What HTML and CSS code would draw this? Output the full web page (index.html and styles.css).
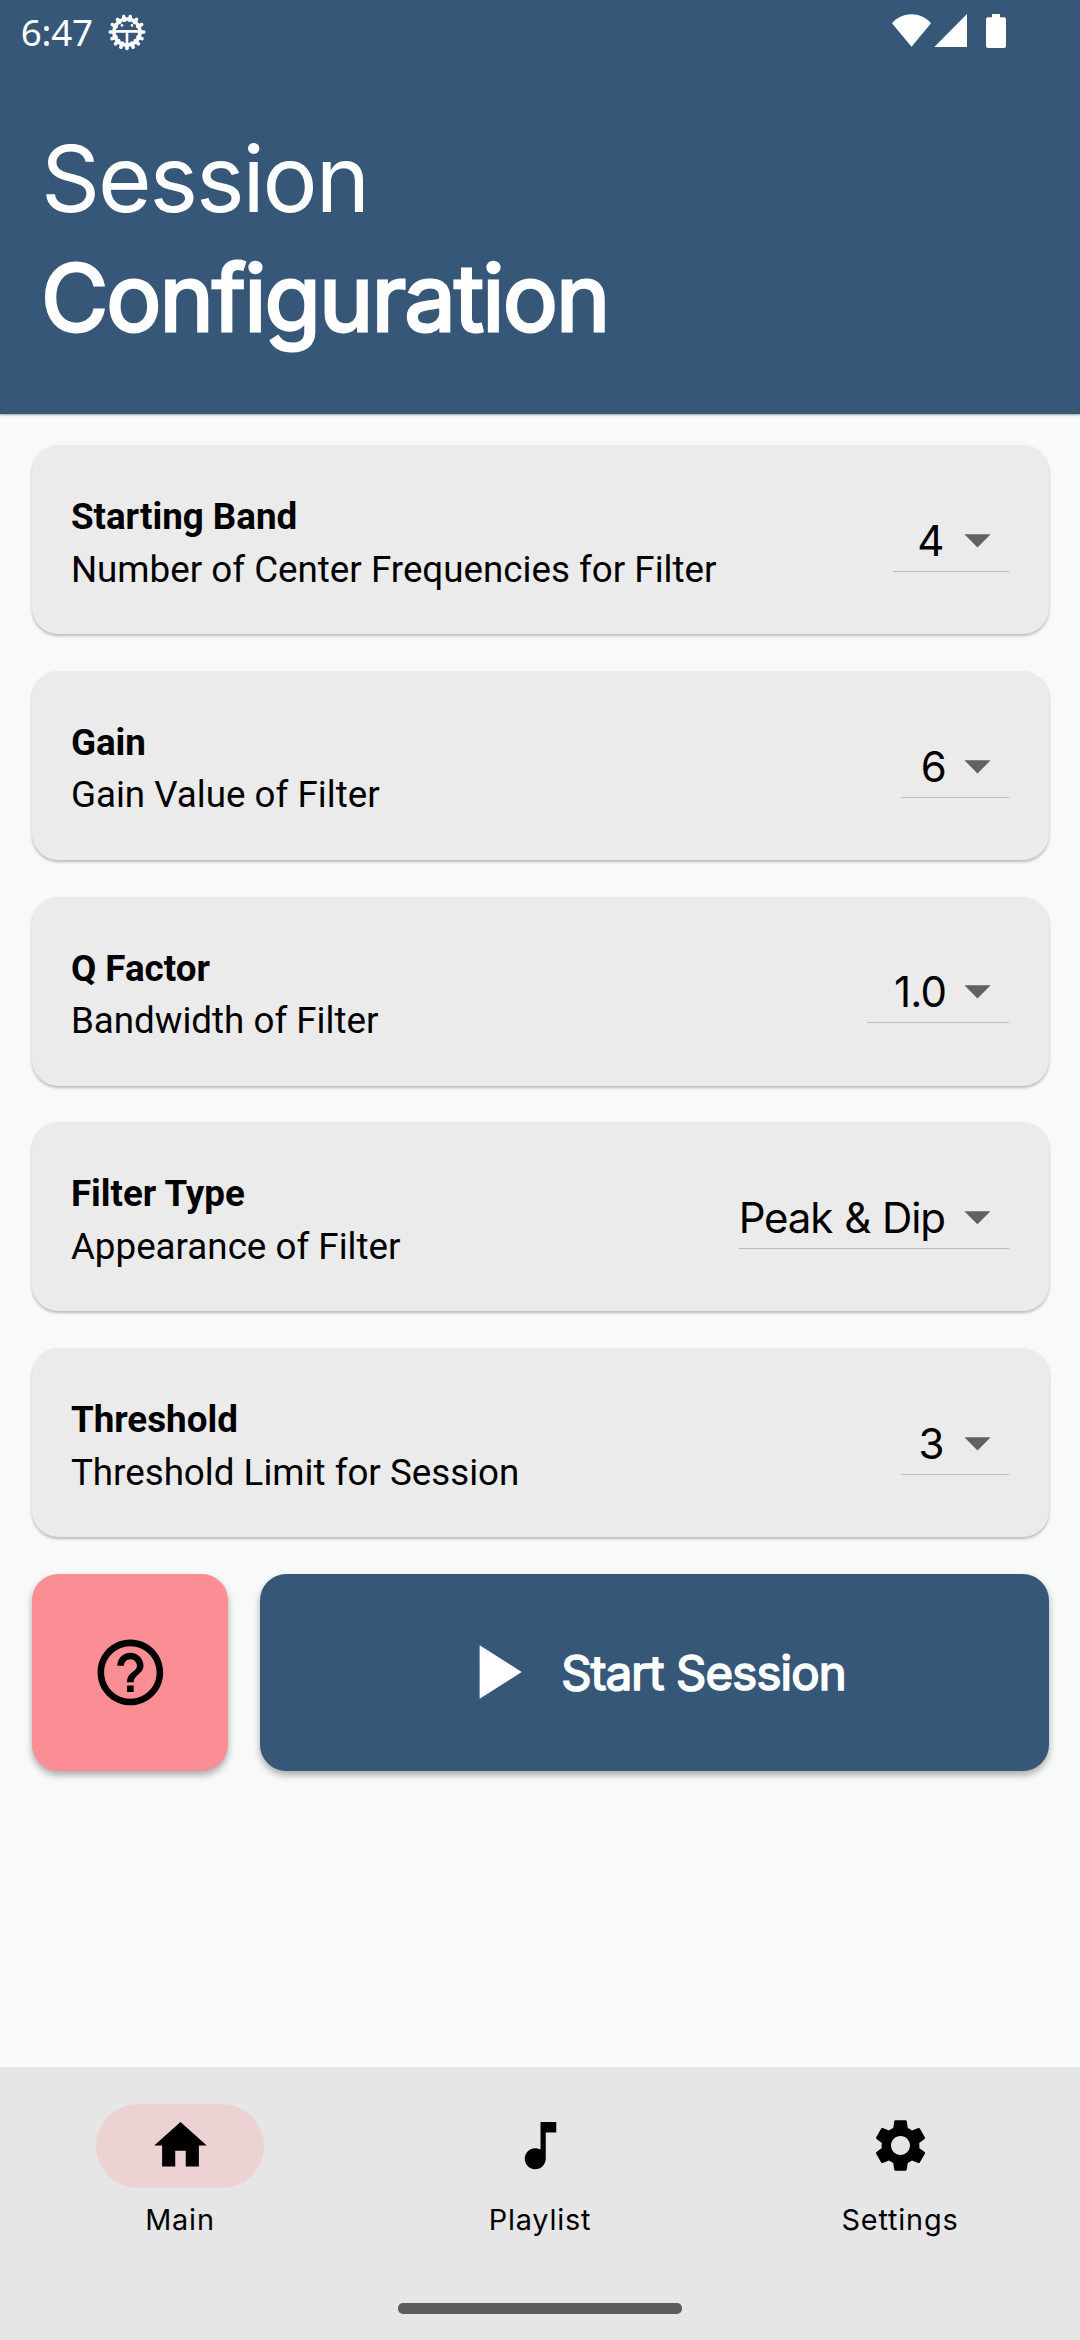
FILE: index.html
```html
<!DOCTYPE html>
<html lang="en">
<head>
<meta charset="utf-8">
<title>Session Configuration</title>
<link rel="stylesheet" href="styles.css">
</head>
<body>
<div class="app">
  <header class="header">
    <div class="status">
      <span class="clock">6:47</span>
      <svg class="debug-icon" viewBox="0 0 38 38">
        <g stroke="#fff" stroke-width="3.6" stroke-linecap="round">
          <path d="M19 3.2V7" transform="rotate(12 19 19)"/>
          <path d="M19 3.2V7" transform="rotate(-12 19 19)"/>
          <path d="M19 3.2V7" transform="rotate(37 19 19)"/>
          <path d="M19 3.2V7" transform="rotate(-37 19 19)"/>
          <path d="M19 2.6V7" transform="rotate(63 19 19)"/>
          <path d="M19 2.6V7" transform="rotate(-63 19 19)"/>
          <path d="M19 2.2V7" transform="rotate(90 19 19)"/>
          <path d="M19 2.2V7" transform="rotate(-90 19 19)"/>
          <path d="M19 2.6V7" transform="rotate(114 19 19)"/>
          <path d="M19 2.6V7" transform="rotate(-114 19 19)"/>
          <path d="M19 2.6V7" transform="rotate(136 19 19)"/>
          <path d="M19 2.6V7" transform="rotate(-136 19 19)"/>
          <path d="M19 2.6V7" transform="rotate(158 19 19)"/>
          <path d="M19 2.6V7" transform="rotate(-158 19 19)"/>
          <path d="M19 35.4V31"/>
        </g>
        <circle cx="19" cy="19" r="13" fill="none" stroke="#fff" stroke-width="3.6"/>
        <path d="M7 18.4H31M19 18.4V32" stroke="#fff" stroke-width="2.6" fill="none"/>
        <circle cx="14" cy="12.4" r="1.3" fill="#fff"/>
        <circle cx="24" cy="12.4" r="1.3" fill="#fff"/>
      </svg>
      <svg class="system-icons" viewBox="0 0 114 34">
        <path d="M0 9.2C10.5-2.6 28.5-2.6 39 9.2L19.5 32.8Z"/>
        <path d="M42.3 33H75V0Z"/>
        <path d="M100 0h8v3.2h4.2q1.8 0 1.8 1.8v27q0 2-2 2h-16q-2 0-2-2V5q0-1.800 1.800-1.800h4.200z"/>
      </svg>
    </div>
    <h1 class="title"><span class="title-light">Session</span><span class="title-bold">Configuration</span></h1>
  </header>

  <main class="content">
    <section class="card">
      <div class="card-text"><h2>Starting Band</h2><p>Number of Center Frequencies for Filter</p></div>
      <div class="select select-band"><span>4</span><svg viewBox="0 0 24 24"><path d="M7 10l5 5 5-5z"/></svg></div>
    </section>
    <section class="card">
      <div class="card-text"><h2>Gain</h2><p>Gain Value of Filter</p></div>
      <div class="select select-gain"><span>6</span><svg viewBox="0 0 24 24"><path d="M7 10l5 5 5-5z"/></svg></div>
    </section>
    <section class="card">
      <div class="card-text"><h2>Q Factor</h2><p>Bandwidth of Filter</p></div>
      <div class="select select-q"><span>1.0</span><svg viewBox="0 0 24 24"><path d="M7 10l5 5 5-5z"/></svg></div>
    </section>
    <section class="card">
      <div class="card-text"><h2>Filter Type</h2><p>Appearance of Filter</p></div>
      <div class="select select-type"><span>Peak &amp; Dip</span><svg viewBox="0 0 24 24"><path d="M7 10l5 5 5-5z"/></svg></div>
    </section>
    <section class="card">
      <div class="card-text"><h2>Threshold</h2><p>Threshold Limit for Session</p></div>
      <div class="select select-threshold"><span>3</span><svg viewBox="0 0 24 24"><path d="M7 10l5 5 5-5z"/></svg></div>
    </section>

    <div class="actions">
      <button class="btn btn-help" aria-label="Help">
        <svg viewBox="0 0 24 24"><path d="M11 18h2v-2h-2v2zm1-16C6.480 2 2 6.480 2 12s4.480 10 10 10 10-4.480 10-10S17.520 2 12 2zm0 18c-4.410 0-8-3.590-8-8s3.590-8 8-8 8 3.590 8 8-3.590 8-8 8zm0-14c-2.210 0-4 1.790-4 4h2c0-1.100.900-2 2-2s2 .900 2 2c0 2-3 1.750-3 5h2c0-2.250 3-2.500 3-5 0-2.210-1.790-4-4-4z"/></svg>
      </button>
      <button class="btn btn-start">
        <svg viewBox="0 0 24 24"><path d="M8 5v14l11-7z"/></svg>
        <span>Start Session</span>
      </button>
    </div>
  </main>

  <footer class="nav">
    <nav class="tabs">
      <a class="tab tab-active"><span class="pill"><svg viewBox="0 0 24 24"><path d="M10 20v-6h4v6h5v-8h3L12 3 2 12h3v8z"/></svg></span><span class="label">Main</span></a>
      <a class="tab"><span class="pill"><svg viewBox="0 0 24 24"><path d="M12 3v10.550c-.590-.340-1.270-.550-2-.550-2.210 0-4 1.790-4 4s1.790 4 4 4 4-1.790 4-4V7h4V3h-6z"/></svg></span><span class="label">Playlist</span></a>
      <a class="tab"><span class="pill"><svg viewBox="0 0 24 24"><path d="M19.140 12.940c.040-.300.060-.610.060-.940 0-.320-.020-.640-.070-.940l2.030-1.580c.180-.140.230-.410.120-.610l-1.920-3.320c-.120-.220-.370-.290-.590-.220l-2.390.960c-.500-.380-1.030-.700-1.620-.940l-.360-2.540c-.040-.240-.240-.410-.480-.410h-3.840c-.240 0-.430.170-.470.410l-.360 2.540c-.590.240-1.130.570-1.620.940l-2.390-.960c-.220-.080-.470 0-.590.220L2.740 8.870c-.120.210-.080.470.120.610l2.030 1.580c-.050.300-.090.630-.090.940s.020.640.070.940l-2.030 1.580c-.180.140-.230.410-.120.610l1.920 3.320c.120.220.370.290.590.220l2.390-.960c.500.380 1.030.700 1.620.940l.360 2.540c.050.240.240.410.480.410h3.840c.240 0 .440-.170.470-.410l.360-2.540c.590-.240 1.130-.560 1.620-.940l2.390.960c.220.080.470 0 .590-.220l1.920-3.320c.120-.220.070-.470-.120-.610l-2.010-1.580zM12 15.600c-1.980 0-3.600-1.620-3.600-3.600s1.620-3.600 3.600-3.600 3.600 1.620 3.600 3.600-1.620 3.600-3.600 3.600z"/></svg></span><span class="label">Settings</span></a>
    </nav>
    <div class="home-bar"></div>
  </footer>
</div>
</body>
</html>
```
FILE: styles.css
```css
* { box-sizing: border-box; margin: 0; padding: 0; }

body { background: #f8faf9; color: #000; font-family: Inter, sans-serif; }

.app { width: 1080px; height: 2340px; display: flex; flex-direction: column; }

/* Header */
.header {
  height: 413.5px;
  background: #365778;
  color: #fff;
  box-shadow: 0 1px 2px rgba(0, 0, 0, .35);
}
.status { height: 63px; display: flex; align-items: flex-start; padding: 0 74px 0 20.7px; }
.clock { font: 36.75px/50px "Noto Sans", sans-serif; margin-top: 7px; letter-spacing: -.2px; }
.debug-icon { width: 38px; height: 38px; margin: 13px 0 0 15.5px; }
.system-icons { width: 114px; height: 34px; margin: 14px 0 0 auto; fill: #fff; }
.title {
  padding: 57px 0 0 41px;
  font-size: 92px;
  line-height: 118.800px;
  font-weight: 400;
  letter-spacing: -2.100px;
}
.title span { display: block; }
.title-bold { -webkit-text-stroke: 2.900px #fff; letter-spacing: -1.900px; }

/* Setting cards */
.content { flex: 1; padding: 31.500px; display: flex; flex-direction: column; gap: 36.750px; }
.card {
  height: 189px;
  padding: 46px 39.500px 0 39.400px;
  display: flex;
  justify-content: space-between;
  align-items: flex-start;
  background: #ebebeb;
  border-radius: 26.250px;
  box-shadow: 0 2px 3px rgba(0, 0, 0, .26);
}
.card-text { font: 36.750px/52.500px Roboto, sans-serif; }
.card-text h2 { font-size: inherit; font-weight: 700; }

.select {
  display: flex;
  justify-content: flex-end;
  height: 64px;
  margin-top: 16.800px;
  border-bottom: 1px solid #bdbdbd;
  font-size: 42px;
  line-height: 65px;
  letter-spacing: -.900px;
  white-space: nowrap;
}
.select svg { width: 63px; height: 63px; fill: #616161; }
.select-band { width: 115.700px; }
.select-band span, .select-threshold span { padding-right: 2.500px; }
.select-gain, .select-threshold { width: 107.700px; }
.select-q { width: 142px; }
.select-type { width: 270.300px; word-spacing: 1.500px; letter-spacing: -1.200px; }
.select-type span { padding-right: 1.500px; }

/* Buttons */
.actions { display: flex; gap: 31.500px; }
.btn {
  height: 196.900px;
  display: flex;
  align-items: center;
  justify-content: center;
  border: 0;
  border-radius: 26.250px;
  box-shadow: 0 4px 7px rgba(0, 0, 0, .32);
  font-family: inherit;
}
.btn-help { width: 196.900px; background: #fa8e94; }
.btn-help svg { width: 78.750px; height: 78.750px; }
.btn-start { flex: 1; justify-content: flex-start; padding-left: 189px; gap: 20.500px; background: #365778; color: #fff; }
.btn-start svg { width: 91.900px; height: 91.900px; fill: #fff; }
.btn-start span { font-size: 47.250px; letter-spacing: -.830px; -webkit-text-stroke: 1.700px #fff; }

/* Bottom navigation */
.nav { height: 273px; background: #e6e6e6; }
.tabs { display: grid; grid-template-columns: repeat(3, 1fr); padding-top: 36.750px; height: 236px; }
.tab { display: flex; flex-direction: column; align-items: center; gap: 14px; }
.pill { width: 168px; height: 84px; display: flex; align-items: center; justify-content: center; border-radius: 42px; }
.pill svg { width: 63px; height: 63px; }
.tab-active .pill { background: #ecd2d3; }
.label { font-size: 28.875px; line-height: 35px; letter-spacing: .800px; }
.home-bar { width: 284px; height: 11px; margin: 0 auto; border-radius: 5px; background: #5c5c5c; }
```
